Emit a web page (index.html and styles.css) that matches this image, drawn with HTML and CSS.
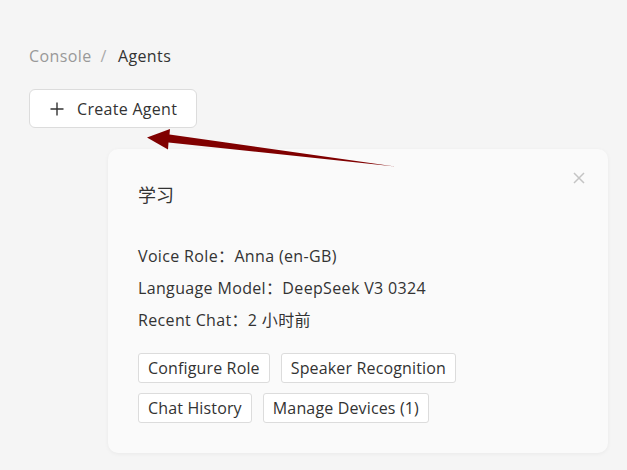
FILE: index.html
```html
<!DOCTYPE html>
<html lang="en">
<head>
<meta charset="utf-8">
<link rel="stylesheet" href="styles.css">
</head>
<body>
<div class="page">
  <nav class="crumbs">
    <span class="crumb-muted">Console</span>
    <span class="crumb-sep">/</span>
    <span class="crumb-current">Agents</span>
  </nav>
  <button class="create-btn">
    <svg class="plus" width="14" height="14" viewBox="0 0 14 14"><path d="M7 0.5V13.5M0.5 7H13.5" stroke="#333" stroke-width="1.4" fill="none"/></svg>
    <span>Create Agent</span>
  </button>
  <section class="card">
    <svg class="close" width="12" height="12" viewBox="0 0 12 12"><path d="M1 1L11 11M11 1L1 11" stroke="#c4c4c4" stroke-width="1.5" fill="none"/></svg>
    <h2 class="title">学习</h2>
    <div class="info">
      <div class="line">Voice Role：Anna (en-GB)</div>
      <div class="line">Language Model：DeepSeek V3 0324</div>
      <div class="line">Recent Chat：2 小时前</div>
    </div>
    <div class="actions">
      <button class="act">Configure Role</button>
      <button class="act">Speaker Recognition</button>
      <button class="act">Chat History</button>
      <button class="act">Manage Devices (1)</button>
    </div>
  </section>
  <svg class="arrow" width="627" height="470" viewBox="0 0 627 470">
    <polygon points="147,137.5 170,129 169.5,134.5 395,166.5 168.5,142.5 168,149.5" fill="#800000"/>
  </svg>
</div>
</body>
</html>
```
FILE: styles.css
```css
* { box-sizing: border-box; }
html, body { margin: 0; padding: 0; }
body {
  background: #f5f5f5;
  font-family: "Open Sans", "Noto Sans CJK SC", sans-serif;
  color: #333;
  width: 627px;
  height: 470px;
  overflow: hidden;
}
.page {
  position: relative;
  padding: 44px 0 0 29px;
  height: 470px;
}
.crumbs {
  display: flex;
  font-size: 16px;
  line-height: 24px;
  height: 24px;
  letter-spacing: 0.4px;
}
.crumb-muted { color: #999; }
.crumb-sep { color: #aaa; margin: 0 11px 0 9px; }
.crumb-current { color: #333; }
.create-btn {
  margin-top: 21px;
  display: flex;
  align-items: center;
  gap: 13px;
  height: 39px;
  width: 168px;
  padding: 0 0 0 20px;
  background: #fff;
  border: 1px solid #dcdcdc;
  border-radius: 6px;
  font-family: inherit;
  font-size: 16px;
  letter-spacing: 0.3px;
  color: #333;
}
.card {
  position: relative;
  margin: 21px 0 0 79px;
  width: 500px;
  height: 304px;
  padding: 30px 30px 29px;
  background: #fafafa;
  border-radius: 10px;
  box-shadow: 0 1px 4px rgba(0,0,0,0.05);
}
.close {
  position: absolute;
  top: 23px;
  right: 23px;
}
.title {
  margin: 0;
  font-size: 18px;
  font-weight: normal;
  line-height: 32px;
  color: #333;
}
.info {
  margin-top: 29px;
  font-size: 16px;
  line-height: 32px;
  letter-spacing: 0.35px;
  color: #333;
}
.actions {
  margin-top: 17px;
  display: flex;
  flex-wrap: wrap;
  column-gap: 11px;
  row-gap: 10px;
  width: 340px;
}
.act {
  height: 30px;
  padding: 0 9px;
  background: #fff;
  border: 1px solid #dcdcdc;
  border-radius: 3px;
  font-family: inherit;
  font-size: 16px;
  letter-spacing: 0.15px;
  color: #333;
  line-height: 28px;
}
.arrow {
  position: absolute;
  left: 0;
  top: 0;
  pointer-events: none;
}
```
